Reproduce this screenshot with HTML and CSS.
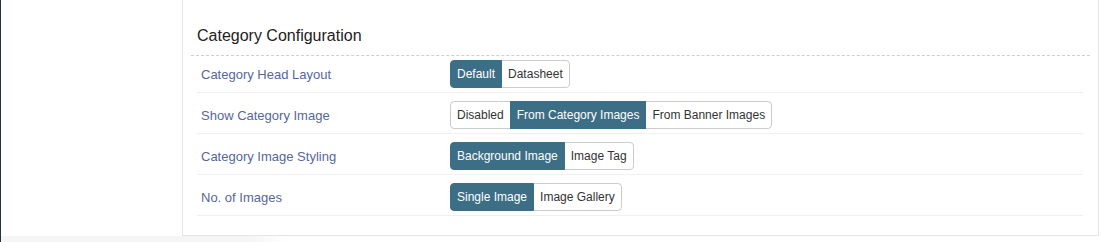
FILE: index.html
```html
<!DOCTYPE html>
<html lang="en">
<head>
<meta charset="utf-8">
<title>Category Configuration</title>
<link rel="stylesheet" href="styles.css">
</head>
<body>
<div class="page">
  <div class="edge"></div>
  <main class="main">
    <section class="card">
      <header class="card-head">
        <h2 class="card-title">Category Configuration</h2>
      </header>
      <div class="rows">
        <div class="row">
          <div class="label">Category Head Layout</div>
          <div class="btn-group">
            <span class="btn active">Default</span><span class="btn">Datasheet</span>
          </div>
        </div>
        <div class="row">
          <div class="label">Show Category Image</div>
          <div class="btn-group">
            <span class="btn">Disabled</span><span class="btn active">From Category Images</span><span class="btn">From Banner Images</span>
          </div>
        </div>
        <div class="row">
          <div class="label">Category Image Styling</div>
          <div class="btn-group">
            <span class="btn active">Background Image</span><span class="btn">Image Tag</span>
          </div>
        </div>
        <div class="row">
          <div class="label">No. of Images</div>
          <div class="btn-group">
            <span class="btn active">Single Image</span><span class="btn">Image Gallery</span>
          </div>
        </div>
      </div>
    </section>
    <div class="shade"></div>
  </main>
</div>
</body>
</html>
```
FILE: styles.css
```css
html, body {
  margin: 0;
  padding: 0;
  background: #ffffff;
}
body {
  font-family: "Liberation Sans", Arial, sans-serif;
  color: #333333;
  width: 1101px;
  height: 242px;
  overflow: hidden;
}
.page {
  display: flex;
  height: 242px;
}
.edge {
  width: 1px;
  flex: none;
  background: #23323b;
}
.main {
  flex: 1;
  display: flex;
  flex-direction: column;
}
.card {
  margin-left: 181px;
  margin-right: 2px;
  border: 1px solid #e6e6e6;
  border-top: none;
  padding: 0 8px 19px 8px;
  background: #ffffff;
}
.card-head {
  padding: 26px 6px 9px 6px;
  border-bottom: 1px dashed #cfcfcf;
}
.card-title {
  margin: 0;
  font-size: 16px;
  line-height: 20px;
  font-weight: normal;
  color: #222222;
}
.rows {
  margin: 0 7px 0 6px;
}
.row {
  display: grid;
  grid-template-columns: 249px 1fr;
  align-items: center;
  padding: 8px 0 4px 4px;
  border-bottom: 1px solid #f0f0f0;
}
.row:first-child {
  padding-top: 4px;
}
.label {
  font-size: 13px;
  color: #56679a;
}
.btn-group {
  display: flex;
}
.btn {
  display: inline-flex;
  align-items: center;
  height: 28px;
  box-sizing: border-box;
  padding: 0 6px;
  font-size: 12px;
  color: #333333;
  background: #ffffff;
  border: 1px solid #cccccc;
  white-space: nowrap;
}
.btn + .btn {
  margin-left: -1px;
}
.btn:first-child {
  border-radius: 4px 0 0 4px;
}
.btn:last-child {
  border-radius: 0 4px 4px 0;
}
.btn.active {
  background: #3c6e86;
  border-color: #3c6e86;
  color: #ffffff;
  position: relative;
}
.shade {
  height: 6px;
  width: 290px;
  background: linear-gradient(to right, #f5f5f5 0%, #f5f5f5 85%, #ffffff 100%);
}
```
